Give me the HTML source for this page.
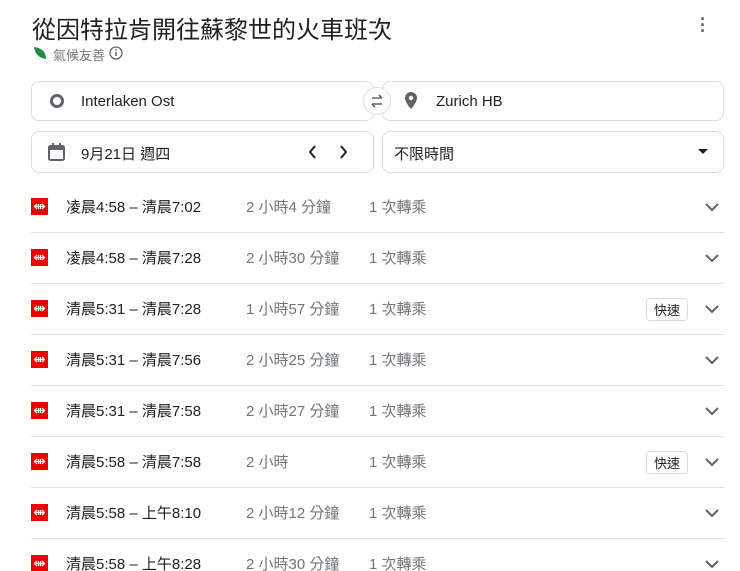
<!DOCTYPE html><html><head><meta charset="utf-8"><style>
html,body{margin:0;width:740px;height:571px;overflow:hidden}
body{background:#fff;font-family:"Liberation Sans","Noto Sans CJK TC",sans-serif;position:relative;color:#202124}
.a{position:absolute}
.box{position:absolute;border:1px solid #dadce0;border-radius:8px;height:40px;box-sizing:border-box}
.row{position:absolute;left:31px;width:693px;height:51px;border-bottom:1px solid #e0e0e0}
.row .ic{position:absolute;left:0;top:17px;width:17px;height:17px}
.row .t{position:absolute;left:35px;top:15px;font-size:15px;color:#202124}
.row .d{position:absolute;left:215px;top:15px;font-size:15px;color:#70757a}
.row .x{position:absolute;left:338px;top:15px;font-size:15px;color:#70757a}
.row .f{position:absolute;left:615px;top:15px;border:1px solid #dadce0;border-radius:4px;font-size:13px;padding:1px 7px;color:#202124}
.row .c{position:absolute;left:674px;top:21px}
</style></head><body>
<div class="a" style="left:32px;top:10px;font-size:24px;color:#202124">從因特拉肯開往蘇黎世的火車班次</div>
<div class="a" style="left:700px;top:16px;font-size:18px;font-weight:bold;line-height:6px;color:#5f6368">·<br>·<br>·</div>
<svg class="a" style="left:33px;top:46px" width="14" height="14"><path d="M1 1C9 2 13 6 13 13C6 12 2 8 1 1Z" fill="#1e8e3e"/></svg>
<div class="a" style="left:53px;top:45px;font-size:13px;color:#70757a">氣候友善</div>
<svg class="a" style="left:109px;top:46px" width="14" height="14"><circle cx="7" cy="7" r="6" fill="none" stroke="#5f6368" stroke-width="1.3"/><path d="M7 6v4" stroke="#5f6368" stroke-width="1.5"/><circle cx="7" cy="4" r="0.9" fill="#5f6368"/></svg>
<div class="box" style="left:31px;top:81px;width:343px"></div>
<div class="box" style="left:382px;top:81px;width:342px"></div>
<svg class="a" style="left:49px;top:93px" width="16" height="16"><circle cx="8" cy="8" r="5.5" fill="none" stroke="#5f6368" stroke-width="3"/></svg>
<div class="a" style="left:81px;top:93px;font-size:15px">Interlaken Ost</div>
<div class="a" style="left:363px;top:87px;width:28px;height:28px;border-radius:50%;background:#fff;border:1px solid #dadce0;box-sizing:border-box"></div>
<svg class="a" style="left:369px;top:93px" width="16" height="16"><path d="M3 5h10M10 2l3 3M13 11H3M6 14l-3-3" stroke="#5f6368" stroke-width="1.6" fill="none"/></svg>
<svg class="a" style="left:404px;top:91px" width="14" height="20"><path d="M7 1a6 6 0 0 0-6 6c0 4.5 6 11 6 11s6-6.5 6-11a6 6 0 0 0-6-6z" fill="#5f6368"/><circle cx="7" cy="7" r="2.2" fill="#fff"/></svg>
<div class="a" style="left:436px;top:93px;font-size:15px">Zurich HB</div>
<div class="box" style="left:31px;top:131px;width:343px;height:42px"></div>
<div class="box" style="left:382px;top:131px;width:342px;height:42px"></div>
<svg class="a" style="left:47px;top:142px" width="20" height="20"><rect x="2" y="4" width="15" height="14" rx="1.5" fill="none" stroke="#5f6368" stroke-width="2"/><rect x="2" y="4" width="15" height="4" fill="#5f6368"/><rect x="5" y="1" width="2" height="4" fill="#5f6368"/><rect x="12" y="1" width="2" height="4" fill="#5f6368"/></svg>
<div class="a" style="left:81px;top:143px;font-size:15px">9月21日 週四</div>
<svg class="a" style="left:305px;top:144px" width="50" height="16"><path d="M10 2l-5 6 5 6M36 2l5 6-5 6" stroke="#202124" stroke-width="2" fill="none"/></svg>
<div class="a" style="left:394px;top:143px;font-size:15px">不限時間</div>
<svg class="a" style="left:697px;top:148px" width="12" height="8"><path d="M1 1h10L6 6z" fill="#202124"/></svg>
<svg width="0" height="0" style="position:absolute"><defs><symbol id="sbb" viewBox="0 0 17 17"><rect width="17" height="17" fill="#eb0000"/><path d="M4 8.5h9M6 6l-2.5 2.5L6 11M11 6l2.5 2.5L11 11M7.5 6v5M9.5 6v5" stroke="#fff" stroke-width="1.3" fill="none"/></symbol></defs></svg>
<div class="row" style="top:181px"><svg class="ic"><use href="#sbb"/></svg><div class="t">凌晨4:58 – 清晨7:02</div><div class="d">2 小時4 分鐘</div><div class="x">1 次轉乘</div><svg class="c" width="14" height="10"><path d="M1 2l6 6 6-6" stroke="#5f6368" stroke-width="2" fill="none"/></svg></div>
<div class="row" style="top:232px"><svg class="ic"><use href="#sbb"/></svg><div class="t">凌晨4:58 – 清晨7:28</div><div class="d">2 小時30 分鐘</div><div class="x">1 次轉乘</div><svg class="c" width="14" height="10"><path d="M1 2l6 6 6-6" stroke="#5f6368" stroke-width="2" fill="none"/></svg></div>
<div class="row" style="top:283px"><svg class="ic"><use href="#sbb"/></svg><div class="t">清晨5:31 – 清晨7:28</div><div class="d">1 小時57 分鐘</div><div class="x">1 次轉乘</div><div class="f">快速</div><svg class="c" width="14" height="10"><path d="M1 2l6 6 6-6" stroke="#5f6368" stroke-width="2" fill="none"/></svg></div>
<div class="row" style="top:334px"><svg class="ic"><use href="#sbb"/></svg><div class="t">清晨5:31 – 清晨7:56</div><div class="d">2 小時25 分鐘</div><div class="x">1 次轉乘</div><svg class="c" width="14" height="10"><path d="M1 2l6 6 6-6" stroke="#5f6368" stroke-width="2" fill="none"/></svg></div>
<div class="row" style="top:385px"><svg class="ic"><use href="#sbb"/></svg><div class="t">清晨5:31 – 清晨7:58</div><div class="d">2 小時27 分鐘</div><div class="x">1 次轉乘</div><svg class="c" width="14" height="10"><path d="M1 2l6 6 6-6" stroke="#5f6368" stroke-width="2" fill="none"/></svg></div>
<div class="row" style="top:436px"><svg class="ic"><use href="#sbb"/></svg><div class="t">清晨5:58 – 清晨7:58</div><div class="d">2 小時</div><div class="x">1 次轉乘</div><div class="f">快速</div><svg class="c" width="14" height="10"><path d="M1 2l6 6 6-6" stroke="#5f6368" stroke-width="2" fill="none"/></svg></div>
<div class="row" style="top:487px"><svg class="ic"><use href="#sbb"/></svg><div class="t">清晨5:58 – 上午8:10</div><div class="d">2 小時12 分鐘</div><div class="x">1 次轉乘</div><svg class="c" width="14" height="10"><path d="M1 2l6 6 6-6" stroke="#5f6368" stroke-width="2" fill="none"/></svg></div>
<div class="row" style="top:538px"><svg class="ic"><use href="#sbb"/></svg><div class="t">清晨5:58 – 上午8:28</div><div class="d">2 小時30 分鐘</div><div class="x">1 次轉乘</div><svg class="c" width="14" height="10"><path d="M1 2l6 6 6-6" stroke="#5f6368" stroke-width="2" fill="none"/></svg></div>
</body></html>
